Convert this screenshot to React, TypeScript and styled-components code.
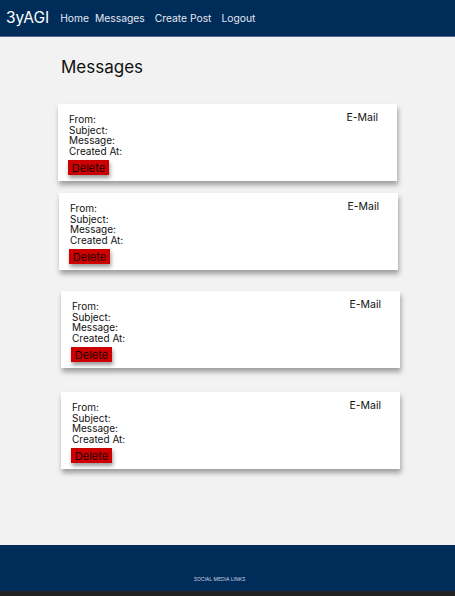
import * as React from 'react'
import styled, { createGlobalStyle } from 'styled-components'

const GlobalStyle = createGlobalStyle`
  html, body {
    margin: 0;
    padding: 0;
    background: #f2f2f2;
    font-family: Inter, "Liberation Sans", sans-serif;
  }
`

const Page = styled.div`
  display: flex;
  flex-direction: column;
  height: 596px;
`

const NavBar = styled.nav`
  display: flex;
  align-items: center;
  height: 36px;
  flex-shrink: 0;
  padding-left: 6px;
  background: #002c5a;
  border-bottom: 1px solid #4d6a8c;
`

const Brand = styled.span`
  color: #ffffff;
  font-size: 15.5px;
  margin-right: 11px;
  margin-top: -2px;
`

const NavLink = styled.a<{ $gap: number }>`
  color: #e3e8f0;
  font-size: 10.3px;
  margin-right: ${p => p.$gap}px;
  text-decoration: none;
`

const Main = styled.main`
  flex: 1;
  display: flex;
  flex-direction: column;
  padding: 20px 0 0 58px;
`

const Heading = styled.h1`
  margin: 0 0 27px 3px;
  font-size: 17px;
  font-weight: 400;
  color: #111;
`

const Card = styled.div<{ $left: number; $top: number }>`
  box-sizing: border-box;
  width: 339px;
  height: 77px;
  margin-left: ${p => p.$left}px;
  margin-top: ${p => p.$top}px;
  padding: 8px 19px 6px 11px;
  display: flex;
  justify-content: space-between;
  background: #ffffff;
  box-shadow: 1px 4px 5px rgba(0, 0, 0, 0.35);
`

const Details = styled.div`
  display: flex;
  flex-direction: column;
  align-items: flex-start;
  padding-top: 2px;
`

const Line = styled.div`
  font-size: 10px;
  line-height: 10.5px;
  color: #111;
`

const EmailLabel = styled.div`
  font-size: 10.5px;
  line-height: 11px;
  color: #111;
`

const DeleteButton = styled.button`
  margin-top: 4px;
  margin-left: -1px;
  width: 41px;
  height: 17px;
  padding: 0;
  border: none;
  background: #cc0000;
  color: #1a0000;
  font-family: Inter, "Liberation Sans", sans-serif;
  font-size: 11px;
  box-shadow: 1px 3px 4px rgba(0, 0, 0, 0.4);
`

const Footer = styled.footer`
  height: 51px;
  flex-shrink: 0;
  background: #002c5a;
  display: flex;
  align-items: flex-end;
  justify-content: center;
  padding-bottom: 9px;
  box-sizing: border-box;
  border-bottom: 5px solid #222222;
`

const FooterText = styled.span`
  color: #c9d3e0;
  font-size: 5px;
  margin-left: -16px;
`

const cards = [
  { left: 0, top: 0 },
  { left: 1, top: 12 },
  { left: 3, top: 21 },
  { left: 3, top: 24 },
]

export default () => {
  return (
    <Page>
      <GlobalStyle />
      <NavBar>
        <Brand>3yAGI</Brand>
        <NavLink $gap={6}>Home</NavLink>
        <NavLink $gap={10}>Messages</NavLink>
        <NavLink $gap={10}>Create Post</NavLink>
        <NavLink $gap={0}>Logout</NavLink>
      </NavBar>
      <Main>
        <Heading>Messages</Heading>
        {cards.map((c, i) => (
          <Card key={i} $left={c.left} $top={c.top}>
            <Details>
              <Line>From:</Line>
              <Line>Subject:</Line>
              <Line>Message:</Line>
              <Line>Created At:</Line>
              <DeleteButton>Delete</DeleteButton>
            </Details>
            <EmailLabel>E-Mail</EmailLabel>
          </Card>
        ))}
      </Main>
      <Footer>
        <FooterText>SOCIAL MEDIA LINKS</FooterText>
      </Footer>
    </Page>
  )
}
